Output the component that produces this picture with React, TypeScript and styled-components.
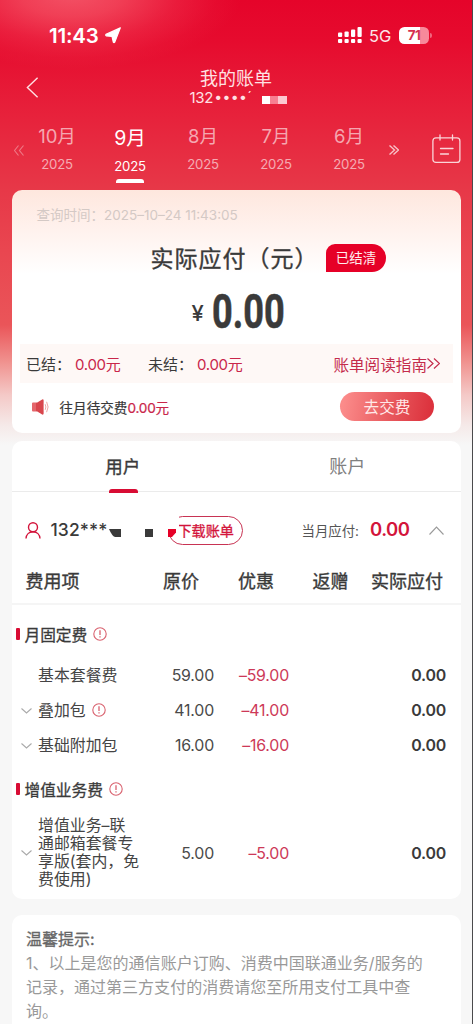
import React from 'react';
import styled, { createGlobalStyle } from 'styled-components';

const GlobalStyle = createGlobalStyle`
  * { box-sizing: border-box; }
  body {
    margin: 0;
    background: #f7f7f7;
    font-family: Inter, "Noto Sans CJK SC", sans-serif;
    color: #3a3a3a;
  }
  svg { display: block; flex: none; }
`;

const Page = styled.div`
  width: 473px;
  height: 1024px;
  overflow: hidden;
  border-right: 1px solid #4a4a4c;
  background:
    radial-gradient(ellipse 170px 75px at 72px -6px, rgba(255, 145, 150, 0.55) 0, rgba(255, 135, 140, 0.44) 30%, rgba(255, 120, 130, 0.2) 62%, rgba(255, 110, 120, 0.06) 85%, rgba(255, 110, 120, 0) 100%) no-repeat,
    linear-gradient(180deg, #e5042a 0, #e60b2e 40px, #e7233c 120px, #e73848 190px, #e94650 250px, #ea5559 325px, #f0928f 362px, #f4c9c7 395px, #f5e9e8 425px, #f7f7f7 445px) no-repeat;
  white-space: nowrap;
`;

const StatusBar = styled.header`
  display: flex;
  align-items: center;
  height: 56px;
  padding: 15px 40px 0 49px;
  color: #fff;
`;

const Clock = styled.span`
  width: 56px;
  font-size: 20.5px;
  font-weight: 600;
  letter-spacing: -0.2px;
`;

const StatusIcons = styled.div`
  display: flex;
  align-items: center;
  margin-left: auto;
`;

const Network = styled.span`
  width: 30px;
  margin-left: 7px;
  font-size: 16.5px;
  font-weight: 400;
  opacity: 0.9;
`;

const Battery = styled.div`
  width: 30px;
  height: 17px;
  border-radius: 5.5px;
  background: linear-gradient(90deg, #fff 71%, #f7899b 71%);
  color: #d63050;
  font-size: 13.5px;
  font-weight: 700;
  line-height: 17px;
  text-align: center;
  letter-spacing: -0.5px;
`;

const BatteryCap = styled.div`
  width: 2px;
  height: 5px;
  margin-left: 1px;
  border-radius: 0 2px 2px 0;
  background: #f0657c;
`;

const NavBar = styled.nav`
  display: grid;
  grid-template-columns: 60px 1fr 60px;
  height: 60px;
  color: #ffe1e4;
`;

const BackButton = styled.div`
  padding: 21px 0 0 26px;
`;

const TitleBlock = styled.div`
  display: flex;
  flex-direction: column;
  align-items: center;
  padding-top: 12px;
`;

const PageTitle = styled.h1`
  margin: 0;
  font-size: 18px;
  font-weight: 400;
  line-height: 22px;
`;

const MaskedPhone = styled.div`
  display: flex;
  width: 98px;
  margin: -1px 0 0 5px;
  font-size: 15px;
  line-height: 18px;
  letter-spacing: -0.3px;
`;

const MaskDots = styled.span`
  width: 49px;
  padding-left: 1px;
  font-size: 14px;
  line-height: 16px;
  letter-spacing: 0.4px;
`;

const MaskTiles = styled.i`
  width: 25px;
  height: 8px;
  margin-top: 7px;
  background: linear-gradient(90deg, #fff 8px, #f77f91 8px 16px, #fcc8d0 16px);
`;

const MonthBar = styled.div`
  display: grid;
  grid-template-columns: 20.5px repeat(5, 73px) 28px 1fr;
  height: 74px;
  color: #fff;
`;

const BarIcon = styled.div<{ $top: number; $left?: number; $opacity?: number }>`
  padding: ${(p) => p.$top}px 0 0 ${(p) => p.$left ?? 0}px;
  opacity: ${(p) => p.$opacity ?? 1};
`;

const MonthTab = styled.div<{ $active?: boolean }>`
  display: flex;
  flex-direction: column;
  align-items: center;
  padding-top: ${(p) => (p.$active ? 10 : 8)}px;
  color: ${(p) => (p.$active ? '#fff' : 'rgba(255,255,255,.6)')};
`;

const MonthName = styled.span<{ $active?: boolean }>`
  font-size: ${(p) => (p.$active ? 19.5 : 18.5)}px;
  line-height: 24px;
`;

const MonthYear = styled.span`
  margin-top: 7px;
  font-size: 13.2px;
  line-height: 18px;
  letter-spacing: -0.2px;
`;

const MonthMarker = styled.i`
  width: 28px;
  height: 4px;
  margin-top: 4px;
  border-radius: 3px 3px 0 0;
  background: #fff;
`;

const Card = styled.section<{ $height: number; $gap?: number }>`
  width: 449px;
  height: ${(p) => p.$height}px;
  margin: ${(p) => p.$gap ?? 0}px 0 0 11.5px;
  border-radius: 10px;
  background: #fff;
  overflow: hidden;
`;

const SummaryCard = styled(Card)`
  background: linear-gradient(180deg, #fee7de 0, #fff3ef 44px, #fff 84px);
`;

const QueryTime = styled.div`
  height: 48px;
  padding: 15px 0 0 25px;
  color: #d4c9c5;
  font-size: 13.5px;
  line-height: 20px;
`;

const PayableRow = styled.div`
  display: flex;
  height: 40px;
  padding-left: 139px;
`;

const PayableTitle = styled.h2`
  width: 175.5px;
  margin: 3px 0 0;
  font-size: 23px;
  font-weight: 400;
  line-height: 36px;
  letter-spacing: 1px;
  -webkit-text-stroke: 0.35px currentColor;
`;

const SettledBadge = styled.span`
  width: 60px;
  height: 28px;
  margin-top: 6px;
  border-radius: 9px 14px 14px 0;
  background: #e60027;
  color: #ffeef0;
  font-size: 13.5px;
  line-height: 29px;
  text-align: center;
`;

const AmountRow = styled.div`
  display: flex;
  height: 66px;
  padding-left: 180px;
`;

const Currency = styled.span`
  width: 20px;
  padding-top: 22px;
  font-size: 22px;
  font-weight: 500;
  line-height: 26px;
`;

const Amount = styled.strong`
  padding-top: 1px;
  font-family: Roboto, sans-serif;
  font-size: 48.5px;
  font-weight: 700;
  line-height: 66px;
  -webkit-text-stroke: 0.6px currentColor;
  transform: scaleX(0.745);
  transform-origin: 0 50%;
`;

const SettleStrip = styled.div`
  display: flex;
  align-items: center;
  width: 433px;
  height: 39px;
  margin-left: 8.5px;
  padding: 0 13px 0 6px;
  background: #fef8f6;
  font-size: 15px;
`;

const StripLabel = styled.span`
  width: 49px;
`;

const StripValue = styled.span`
  width: 73px;
  color: #c9264a;
  letter-spacing: -0.3px;
`;

const GuideLink = styled.a`
  display: flex;
  align-items: center;
  margin-left: auto;
  color: #c42b4b;
  font-size: 15.6px;
`;

const PastDueRow = styled.div`
  display: flex;
  align-items: center;
  height: 48px;
  padding: 0 26.5px 0 20px;
`;

const PastDueText = styled.span`
  margin-left: 10px;
  font-size: 13.6px;
  -webkit-text-stroke: 0.2px currentColor;
`;

const RedText = styled.span`
  color: #c9264a;
  letter-spacing: -0.2px;
`;

const PayButton = styled.button`
  width: 94px;
  height: 29px;
  margin: -2px 0 0 auto;
  padding: 0;
  border: 0;
  border-radius: 15px;
  background: linear-gradient(100deg, #fb8b8a 5%, #e8585d 55%, #dc323d 95%);
  color: #ffe9e9;
  font: 15.6px/31px Inter, "Noto Sans CJK SC", sans-serif;
`;

const Tabs = styled.div`
  display: grid;
  grid-template-columns: 1fr 1fr;
  height: 51px;
  border-bottom: 1px solid #ebebeb;
`;

const Tab = styled.div<{ $active?: boolean }>`
  display: flex;
  flex-direction: column;
  align-items: center;
  justify-content: space-between;
  height: 52px;
  padding: 12px 2px 0 0;
  color: ${(p) => (p.$active ? '#3a3a3a' : '#808080')};
  font-size: ${(p) => (p.$active ? 17.5 : 18)}px;
  line-height: 28px;
  -webkit-text-stroke: ${(p) => (p.$active ? 0.35 : 0)}px currentColor;
`;

const TabMarker = styled.i`
  width: 29px;
  height: 4px;
  margin-left: 1px;
  border-radius: 3px 3px 0 0;
  background: #d80c34;
`;

const AccountRow = styled.div`
  display: flex;
  align-items: center;
  height: 76px;
  padding: 0 16.5px 0 13px;
`;

const PhoneNumber = styled.span`
  width: 58px;
  margin: -1px 0 0 10px;
  font-size: 17.5px;
  font-weight: 500;
  letter-spacing: 0.1px;
`;

const MaskTail = styled.svg`
  margin-top: 6px;
`;

const DownloadWrap = styled.div`
  position: relative;
  margin-left: 7px;
`;

const DownloadButton = styled.div`
  width: 75px;
  height: 29px;
  padding-left: 9px;
  border: 1px solid #c83353;
  border-radius: 14.5px;
  color: #d3143b;
  font-size: 14.1px;
  line-height: 27px;
  -webkit-text-stroke: 0.3px currentColor;
`;

const DownloadMask = styled.svg`
  position: absolute;
  left: 0;
  top: -1px;
`;

const DueLabel = styled.span`
  width: 68.5px;
  margin: 0 0 0 auto;
  color: #555;
  font-size: 13.4px;
`;

const DueValue = styled.strong`
  width: 59px;
  margin-top: -2px;
  color: #d3143b;
  font-size: 18.5px;
  font-weight: 600;
  line-height: 22px;
  letter-spacing: -0.5px;
`;

const TableHead = styled.div`
  display: grid;
  grid-template-columns: 137.5px 75px 74.5px 58.5px 1fr;
  align-items: center;
  height: 36px;
  margin-top: -4px;
  padding-left: 14px;
  font-size: 18px;
  line-height: 26px;
  -webkit-text-stroke: 0.35px currentColor;
`;

const Divider = styled.hr`
  height: 2px;
  margin: 3px 0 0;
  border: 0;
  background: #f5f5f5;
`;

const Section = styled.div<{ $top: number; $bottom: number }>`
  display: flex;
  align-items: center;
  height: 24px;
  margin: ${(p) => p.$top}px 0 ${(p) => p.$bottom}px;
  padding-left: 4.5px;
  font-size: 15.7px;
  -webkit-text-stroke: 0.3px currentColor;
`;

const SectionBar = styled.i`
  width: 3.5px;
  height: 12px;
  margin-right: 5px;
  border-radius: 1px;
  background: #d80c34;
`;

const FeeRow = styled.div<{ $height?: number }>`
  display: grid;
  grid-template-columns: 26.5px 110px 66px 75px 157px;
  align-items: center;
  height: ${(p) => p.$height ?? 35}px;
  font-size: 15.9px;
`;

const FeeName = styled.div`
  display: flex;
  align-items: center;
  color: #444;
  line-height: 18px;
  white-space: pre;
`;

const FeeToggle = styled.div`
  padding-left: 9.5px;
`;

const Price = styled.span<{ $tone?: 'discount' | 'total' }>`
  text-align: right;
  color: ${(p) => (p.$tone === 'discount' ? '#cd3958' : p.$tone === 'total' ? '#3a3a3a' : '#4a4a4a')};
  font-weight: ${(p) => (p.$tone === 'total' ? 600 : 400)};
  letter-spacing: -0.2px;
`;

const NoticeCard = styled(Card)`
  padding: 12px 14.5px;
  color: #999;
  font-size: 16.03px;
  line-height: 24px;
`;

const NoticeTitle = styled.div`
  color: #666;
  -webkit-text-stroke: 0.3px currentColor;
`;

const Chevron = ({ up, w = 11, h = 6, color = '#aaa' }: { up?: boolean; w?: number; h?: number; color?: string }) => (
  <svg width={w} height={h} viewBox={`0 0 ${w} ${h}`} fill="none" stroke={color} strokeWidth="1.1">
    <path d={up ? `M.5 ${h - 0.5} L${w / 2} 1 L${w - 0.5} ${h - 0.5}` : `M.5 .5 L${w / 2} ${h - 1} L${w - 0.5} .5`} />
  </svg>
);

const DoubleAngle = ({ left, w = 11, h = 11, gap = 5, sw = 1.2 }: { left?: boolean; w?: number; h?: number; gap?: number; sw?: number }) => {
  const s = w - gap - 1;
  const angle = (x: number) =>
    left ? `M${x + s} .5 L${x} ${h / 2} L${x + s} ${h - 0.5}` : `M${x} .5 L${x + s} ${h / 2} L${x} ${h - 0.5}`;
  return (
    <svg width={w} height={h} viewBox={`0 0 ${w} ${h}`} fill="none" stroke="currentColor" strokeWidth={sw}>
      <path d={angle(0.5) + angle(0.5 + gap)} />
    </svg>
  );
};

const InfoSvg = styled.svg`
  margin: -1px 0 0 6px;
`;

const InfoIcon = () => (
  <InfoSvg width="14" height="14" viewBox="0 0 14 14" fill="none" stroke="#d9626f">
    <circle cx="7" cy="7" r="6.2" strokeWidth="1.1" />
    <path d="M7 3.2v4.9M7 9.3v1.3" strokeWidth="1.3" />
  </InfoSvg>
);

const months = ['10月', '9月', '8月', '7月', '6月'];

interface Fee {
  name: string;
  price: string;
  discount: string;
  toggle?: boolean;
  info?: boolean;
  height?: number;
}

const fixedFees: Fee[] = [
  { name: '基本套餐费', price: '59.00', discount: '–59.00' },
  { name: '叠加包', price: '41.00', discount: '–41.00', toggle: true, info: true },
  { name: '基础附加包', price: '16.00', discount: '–16.00', toggle: true },
];

const extraFees: Fee[] = [
  { name: '增值业务–联\n通邮箱套餐专\n享版(套内，免\n费使用)', price: '5.00', discount: '–5.00', toggle: true, height: 76 },
];

const FeeLine = ({ fee }: { fee: Fee }) => (
  <FeeRow $height={fee.height}>
    <FeeToggle>{fee.toggle && <Chevron />}</FeeToggle>
    <FeeName>
      {fee.name}
      {fee.info && <InfoIcon />}
    </FeeName>
    <Price>{fee.price}</Price>
    <Price $tone="discount">{fee.discount}</Price>
    <Price $tone="total">0.00</Price>
  </FeeRow>
);

export default function App() {
  return (
    <>
      <GlobalStyle />
      <Page>
        <StatusBar>
          <Clock>11:43</Clock>
          <svg width="17" height="17" viewBox="0 0 17 17" fill="#fff" stroke="#fff" strokeWidth="1.2" strokeLinejoin="round">
            <path d="M15.3 .9 L1 7.4 Q.4 8.2 1.2 8.8 L7 9.4 L8.3 15.2 Q9 16 9.7 15.2 Z" />
          </svg>
          <StatusIcons>
            <svg width="24" height="17" viewBox="0 0 24 17" fill="#fff">
              <rect x="0" y="12" width="4.2" height="4" rx="1" />
              <rect x="6.5" y="12" width="4.2" height="4" rx="1" />
              <rect x="13" y="12" width="4.2" height="4" rx="1" />
              <rect x="19.5" y="12" width="4.2" height="4" rx="1" />
              <rect x="0" y="5.5" width="4.2" height="4.5" rx="1" />
              <rect x="6.5" y="4.5" width="4.2" height="5.5" rx="1" />
              <rect x="13" y="2.5" width="4.2" height="7.5" rx="1" />
              <rect x="19.5" y="0" width="4.2" height="10" rx="1" />
            </svg>
            <Network>5G</Network>
            <Battery>71</Battery>
            <BatteryCap />
          </StatusIcons>
        </StatusBar>

        <NavBar>
          <BackButton>
            <svg width="13" height="21" viewBox="0 0 13 21" fill="none" stroke="currentColor" strokeWidth="1.4">
              <path d="M11.6 .8 L1.4 10.5 L11.6 20.2" />
            </svg>
          </BackButton>
          <TitleBlock>
            <PageTitle>我的账单</PageTitle>
            <MaskedPhone>
              132<MaskDots>••••ˊ</MaskDots>
              <MaskTiles />
            </MaskedPhone>
          </TitleBlock>
        </NavBar>

        <MonthBar>
          <BarIcon $top={29} $left={14} $opacity={0.35}>
            <DoubleAngle left w={10} h={11} gap={5} />
          </BarIcon>
          {months.map((m) => {
            const active = m === '9月';
            return (
              <MonthTab key={m} $active={active}>
                <MonthName $active={active}>{m}</MonthName>
                <MonthYear>2025</MonthYear>
                {active && <MonthMarker />}
              </MonthTab>
            );
          })}
          <BarIcon $top={29} $left={3} $opacity={0.7}>
            <DoubleAngle w={10} h={10} gap={4} sw={1.4} />
          </BarIcon>
          <BarIcon $top={18} $left={18} $opacity={0.8}>
            <svg width="29" height="30" viewBox="0 0 29 30" fill="none" stroke="#fff" strokeWidth="1.3" strokeLinecap="round">
              <rect x=".9" y="3.9" width="27" height="24.5" rx="3" />
              <path d="M8 1v5M20.5 1v5M8.5 14.5h12.5M8.5 20h8" />
            </svg>
          </BarIcon>
        </MonthBar>

        <SummaryCard $height={243}>
          <QueryTime>查询时间：2025–10–24 11:43:05</QueryTime>
          <PayableRow>
            <PayableTitle>实际应付（元）</PayableTitle>
            <SettledBadge>已结清</SettledBadge>
          </PayableRow>
          <AmountRow>
            <Currency>¥</Currency>
            <Amount>0.00</Amount>
          </AmountRow>
          <SettleStrip>
            <StripLabel>已结：</StripLabel>
            <StripValue>0.00元</StripValue>
            <StripLabel>未结：</StripLabel>
            <StripValue>0.00元</StripValue>
            <GuideLink>
              账单阅读指南
              <DoubleAngle w={13} h={11} gap={6.5} />
            </GuideLink>
          </SettleStrip>
          <PastDueRow>
            <svg width="18" height="16" viewBox="0 0 18 16">
              <path d="M1 3.6h4v8.8H1a1 1 0 0 1-1-1V4.6a1 1 0 0 1 1-1Z" fill="#e4666b" />
              <path d="M4 4.2 10.2.4Q11.6 0 11.6 1.5v13Q11.6 16 10.2 15.5L4 11.8Z" fill="#d8454c" />
              <path d="M13.2 5.2Q14.6 8 13.2 10.8M14.6 2.8Q17.6 8 14.6 13.2" fill="none" stroke="#eea5a5" />
            </svg>
            <PastDueText>
              往月待交费<RedText>0.00元</RedText>
            </PastDueText>
            <PayButton>去交费</PayButton>
          </PastDueRow>
        </SummaryCard>

        <Card $height={458} $gap={8}>
          <Tabs>
            <Tab $active>
              用户
              <TabMarker />
            </Tab>
            <Tab>账户</Tab>
          </Tabs>
          <AccountRow>
            <svg width="16" height="17" viewBox="0 0 16 17" fill="none" stroke="#d3143b" strokeWidth="1.4">
              <circle cx="8" cy="5.3" r="4.5" />
              <path d="M1 16.5C1.2 12.5 4 9.8 8 9.8s6.8 2.7 7 6.7" />
            </svg>
            <PhoneNumber>132***</PhoneNumber>
            <MaskTail width="52" height="8" viewBox="0 0 52 8" fill="#3a3a3a">
              <path d="M0 0H12V8H6Q3 7 0 0Z" />
              <rect x="36" y="0" width="8" height="8" />
            </MaskTail>
            <DownloadWrap>
              <DownloadButton>下载账单</DownloadButton>
              <DownloadMask width="11" height="22" viewBox="0 0 11 22">
                <path d="M0 0H11V14H0Z" fill="#fff" />
                <path d="M0 14H8V17.5L4 22H0Z" fill="#e60027" />
              </DownloadMask>
            </DownloadWrap>
            <DueLabel>当月应付:</DueLabel>
            <DueValue>0.00</DueValue>
            <Chevron up w={15} h={9} color="#999" />
          </AccountRow>
          <TableHead>
            <span>费用项</span>
            <span>原价</span>
            <span>优惠</span>
            <span>返赠</span>
            <span>实际应付</span>
          </TableHead>
          <Divider />
          <Section $top={17} $bottom={12}>
            <SectionBar />
            月固定费
            <InfoIcon />
          </Section>
          {fixedFees.map((f) => (
            <FeeLine key={f.name} fee={f} />
          ))}
          <Section $top={14} $bottom={14}>
            <SectionBar />
            增值业务费
            <InfoIcon />
          </Section>
          {extraFees.map((f) => (
            <FeeLine key={f.name} fee={f} />
          ))}
        </Card>

        <NoticeCard $height={140} $gap={16}>
          <NoticeTitle>温馨提示:</NoticeTitle>
          <div>1、以上是您的通信账户订购、消费中国联通业务/服务的</div>
          <div>记录，通过第三方支付的消费请您至所用支付工具中查</div>
          <div>询。</div>
        </NoticeCard>
      </Page>
    </>
  );
}
